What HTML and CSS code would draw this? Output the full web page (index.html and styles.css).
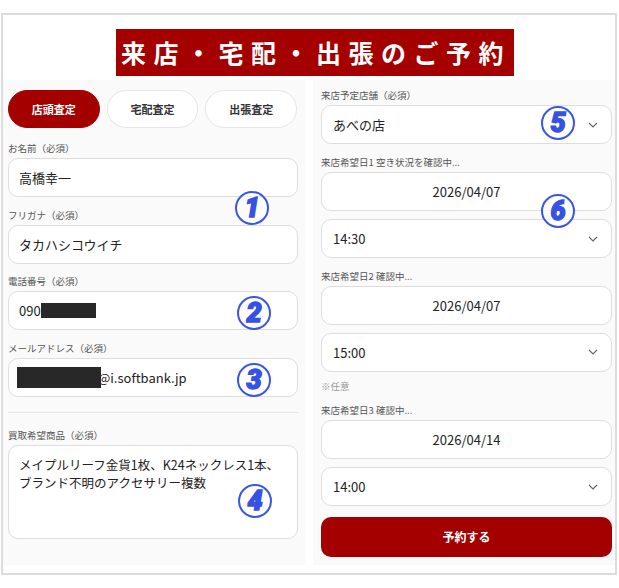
FILE: index.html
```html
<!DOCTYPE html>
<html lang="ja">
<head>
<meta charset="utf-8">
<title>来店・宅配・出張のご予約</title>
<link rel="stylesheet" href="styles.css">
</head>
<body>
<div class="frame">
  <div class="title-row"><h1 class="title">来店・宅配・出張のご予約</h1></div>
  <div class="cols">
    <div class="col col-left">
      <div class="tabs">
        <span class="tab active">店頭査定</span>
        <span class="tab">宅配査定</span>
        <span class="tab">出張査定</span>
      </div>
      <div class="field">
        <div class="label">お名前（必須）</div>
        <div class="input">高橋幸一</div>
      </div>
      <div class="field">
        <div class="label">フリガナ（必須）</div>
        <div class="input">タカハシコウイチ</div>
      </div>
      <div class="field">
        <div class="label">電話番号（必須）</div>
        <div class="input">090<span class="redact redact-phone"></span></div>
      </div>
      <div class="field">
        <div class="label">メールアドレス（必須）</div>
        <div class="input input-mail"><span class="redact redact-mail"></span><span class="mail-rest">@i.softbank.jp</span></div>
      </div>
      <div class="divider"></div>
      <div class="field">
        <div class="label">買取希望商品（必須）</div>
        <div class="textarea"><div class="ta-line">メイプルリーフ金貨1枚、K24ネックレス1本、</div><div class="ta-line">ブランド不明のアクセサリー複数</div></div>
      </div>
    </div>
    <div class="col col-right">
      <div class="label">来店予定店舗（必須）</div>
      <div class="select select-shop"><span>あべの店</span><svg class="chev" width="10" height="6" viewBox="0 0 10 6"><path d="M1 1l4 4 4-4" fill="none" stroke="#666" stroke-width="1.1"/></svg></div>
      <div class="group">
        <div class="label">来店希望日1 空き状況を確認中...</div>
        <div class="date">2026/04/07</div>
        <div class="select"><span>14:30</span><svg class="chev" width="10" height="6" viewBox="0 0 10 6"><path d="M1 1l4 4 4-4" fill="none" stroke="#666" stroke-width="1.1"/></svg></div>
      </div>
      <div class="group">
        <div class="label">来店希望日2 確認中...</div>
        <div class="date">2026/04/07</div>
        <div class="select"><span>15:00</span><svg class="chev" width="10" height="6" viewBox="0 0 10 6"><path d="M1 1l4 4 4-4" fill="none" stroke="#666" stroke-width="1.1"/></svg></div>
        <div class="note">※任意</div>
      </div>
      <div class="group">
        <div class="label">来店希望日3 確認中...</div>
        <div class="date">2026/04/14</div>
        <div class="select"><span>14:00</span><svg class="chev" width="10" height="6" viewBox="0 0 10 6"><path d="M1 1l4 4 4-4" fill="none" stroke="#666" stroke-width="1.1"/></svg></div>
      </div>
      <button class="submit">予約する</button>
    </div>
  </div>
  <span class="badge b1">1</span>
  <span class="badge b2">2</span>
  <span class="badge b3">3</span>
  <span class="badge b4">4</span>
  <span class="badge b5">5</span>
  <span class="badge b6">6</span>
</div>
</body>
</html>
```
FILE: styles.css
```css
* { box-sizing: border-box; }
html, body { margin: 0; padding: 0; background: #fff; }
body {
  font-family: "Noto Sans CJK JP", "Noto Sans", sans-serif;
  color: #222;
}
.frame {
  position: relative;
  width: 616px;
  margin: 13px 0 0 1px;
  border: 2px solid #dcdcdc;
  padding: 14px 0 8px 0;
  background: #fff;
}
.title-row {
  display: flex;
  justify-content: center;
  padding-left: 12px;
  margin-bottom: 4px;
}
.title {
  margin: 0;
  background: #a50000;
  color: #fff;
  font-size: 25px;
  font-weight: 700;
  line-height: 47px;
  height: 47px;
  letter-spacing: 7.5px;
  padding: 0 0 0 5px;
  width: 398px;
  white-space: nowrap;
  overflow: hidden;
}
.cols {
  display: grid;
  grid-template-columns: 302px 302px;
  column-gap: 8px;
}
.col { background: #fafafa; }
.col-left { padding: 10px 7px 8px 5px; }
.col-right { padding: 8px 3px 8px 8px; }
.tabs {
  display: flex;
  gap: 7px;
  margin: 0 1px 13px 0;
}
.tab {
  flex: 1;
  height: 38px;
  border-radius: 19px;
  border: 1px solid #e6e6e6;
  background: #fff;
  display: flex;
  align-items: center;
  justify-content: center;
  font-size: 11px;
  font-weight: 700;
  color: #333;
}
.tab.active {
  background: #a50000;
  border-color: #a50000;
  color: #fff;
}
.label {
  font-size: 9.5px;
  line-height: 14px;
  color: #555;
  margin-bottom: 3px;
  white-space: nowrap;
}
.field { margin-bottom: 10.5px; }
.input, .date, .select, .textarea {
  background: #fff;
  border: 1px solid #dedede;
  border-radius: 10px;
  font-size: 13px;
  color: #222;
}
.input {
  height: 39px;
  display: flex;
  align-items: center;
  padding-left: 10px;
}
.redact {
  display: inline-block;
  background: #282828;
}
.redact-phone { width: 55px; height: 15px; }
.input-mail { padding-left: 8px; }
.redact-mail {
  width: 84px;
  height: 21px;
  position: relative;
  z-index: 1;
}
.mail-rest { margin-left: -3px; }
.divider {
  border-top: 1px solid #e8e8e8;
  margin: 15px 0 15px 0;
}
.textarea {
  height: 94px;
  padding: 10px 8px 0 10px;
  font-size: 12.5px;
  white-space: nowrap;
}
.ta-line { line-height: 18px; height: 18px; }
.select {
  height: 39px;
  display: flex;
  align-items: center;
  justify-content: space-between;
  padding: 0 13px 0 11px;
}
.select-shop { margin-bottom: 11px; }
.date {
  height: 39px;
  display: flex;
  align-items: center;
  justify-content: center;
  margin-bottom: 8px;
}
.group { margin-bottom: 10.5px; }
.note {
  font-size: 9.5px;
  line-height: 14px;
  color: #999;
  margin-top: 7px;
}
.submit {
  display: block;
  width: 100%;
  height: 40px;
  margin-top: 1.5px;
  border: 0;
  border-radius: 10px;
  background: #a50000;
  color: #fff;
  font-family: inherit;
  font-size: 12px;
  font-weight: 700;
}
.badge {
  position: absolute;
  width: 34px;
  height: 34px;
  border-radius: 50%;
  border: 2px solid #3a55e8;
  color: #3552e4;
  font-family: "Roboto", "DejaVu Sans", sans-serif;
  font-weight: 900;
  font-style: italic;
  font-size: 27px;
  line-height: 30px;
  text-align: center;
  -webkit-text-stroke: 1.4px #3552e4;
  background: rgba(255,255,255,0.6);
}
.b1 { left: 232px; top: 176px; }
.b2 { left: 234px; top: 281px; }
.b3 { left: 234px; top: 348px; }
.b4 { left: 235px; top: 469px; }
.b5 { left: 538px; top: 91px; }
.b6 { left: 538px; top: 179px; }
```
